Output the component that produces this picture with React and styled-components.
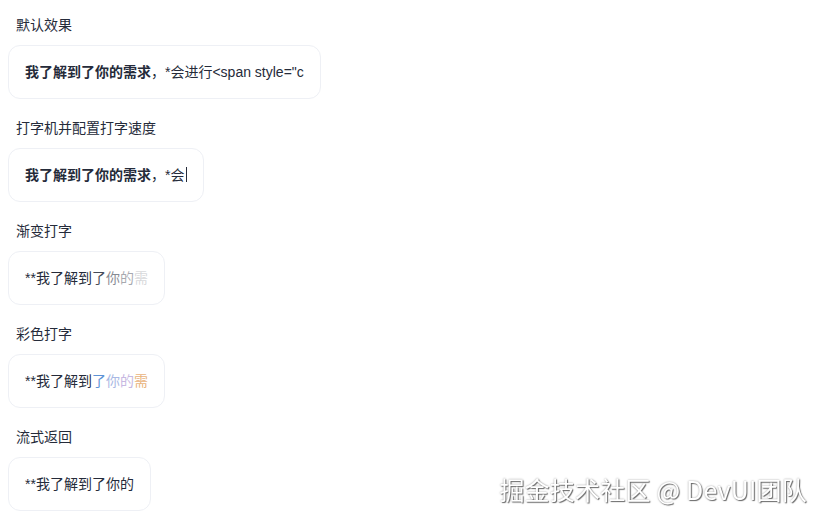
import React from "react";
import styled, { createGlobalStyle } from "styled-components";

const Global = createGlobalStyle`
  html, body { background: #ffffff; }
  body {
    margin: 8px;
    font-family: "Liberation Sans", "Noto Sans CJK SC", sans-serif;
    color: #252b3a;
  }
`;

const Page = styled.div`
  display: flex;
  flex-direction: column;
  align-items: flex-start;
`;

const Section = styled.section`
  display: flex;
  flex-direction: column;
  align-items: flex-start;
  margin-bottom: 12px;
`;

const Label = styled.div`
  padding: 7px 8px 10px;
  font-size: 14px;
  line-height: 20px;
  color: #252b3a;
`;

const Card = styled.div`
  border: 1px solid #eef0f5;
  border-radius: 12px;
  padding: 16px;
  font-size: 14px;
  line-height: 20px;
  color: #252b3a;
  white-space: nowrap;
  background: #fff;
`;

const Bold = styled.strong`
  font-weight: 700;
`;

const Cursor = styled.span`
  display: inline-block;
  width: 1px;
  height: 15px;
  background: #252b3a;
  vertical-align: -2px;
  margin-left: 2px;
`;

const Ch = styled.span`
  color: ${(p) => p.$c || "inherit"};
  opacity: ${(p) => (p.$o == null ? 1 : p.$o)};
`;

const Watermark = styled.div`
  position: fixed;
  right: 14px;
  bottom: 19px;
  font-family: "Noto Sans CJK SC", "Liberation Sans", sans-serif;
  font-size: 25px;
  line-height: 28px;
  color: #ffffff;
  text-shadow: 1px 1px 1px #6b6b6b, 0 0 2px #9a9a9a;
  letter-spacing: 0.2px;
`;

const fade = [
  ["**", 1], ["我", 1], ["了", 1], ["解", 1], ["到", 1], ["了", 0.85],
  ["你", 0.55], ["的", 0.4], ["需", 0.18],
];

const colorful = [
  ["**我了解到", null],
  ["了", "#5d93d6"],
  ["你", "#a9b8e4"],
  ["的", "#c7b8e2"],
  ["需", "#e9b47c"],
];

export default function App() {
  return (
    <>
      <Global />
      <Page>
        <Section>
          <Label>默认效果</Label>
          <Card>
            <Bold>我了解到了你的需求</Bold>，*会进行&lt;span style="c
          </Card>
        </Section>
        <Section>
          <Label>打字机并配置打字速度</Label>
          <Card>
            <Bold>我了解到了你的需求</Bold>，*会<Cursor />
          </Card>
        </Section>
        <Section>
          <Label>渐变打字</Label>
          <Card>
            {fade.map(([t, o], i) => (
              <Ch key={i} $o={o}>{t}</Ch>
            ))}
          </Card>
        </Section>
        <Section>
          <Label>彩色打字</Label>
          <Card>
            {colorful.map(([t, c], i) => (
              <Ch key={i} $c={c}>{t}</Ch>
            ))}
          </Card>
        </Section>
        <Section>
          <Label>流式返回</Label>
          <Card>**我了解到了你的</Card>
        </Section>
      </Page>
      <Watermark>掘金技术社区 @ DevUI团队</Watermark>
    </>
  );
}
